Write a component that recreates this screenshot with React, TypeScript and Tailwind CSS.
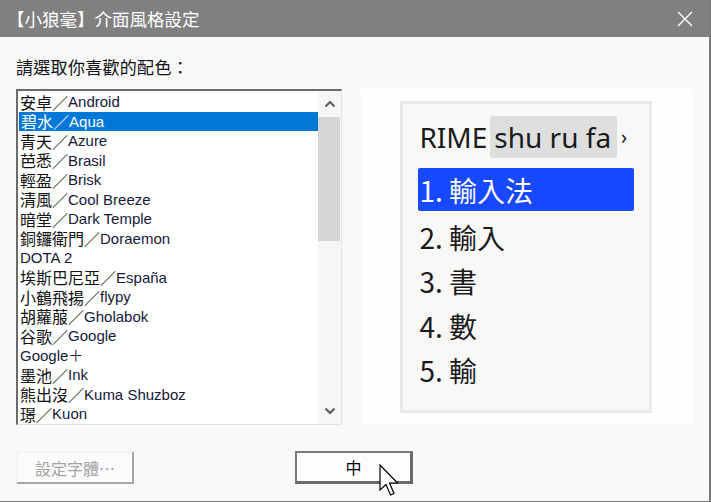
import React from 'react';

const CJK = '"Noto Sans CJK TC", "Noto Sans", sans-serif';

const schemes: { zh?: string; en: string }[] = [
  { zh: '安卓', en: 'Android' },
  { zh: '碧水', en: 'Aqua' },
  { zh: '青天', en: 'Azure' },
  { zh: '芭悉', en: 'Brasil' },
  { zh: '輕盈', en: 'Brisk' },
  { zh: '清風', en: 'Cool Breeze' },
  { zh: '暗堂', en: 'Dark Temple' },
  { zh: '銅鑼衛門', en: 'Doraemon' },
  { en: 'DOTA 2' },
  { zh: '埃斯巴尼亞', en: 'España' },
  { zh: '小鶴飛揚', en: 'flypy' },
  { zh: '胡蘿菔', en: 'Gholabok' },
  { zh: '谷歌', en: 'Google' },
  { en: 'Google＋' },
  { zh: '墨池', en: 'Ink' },
  { zh: '熊出沒', en: 'Kuma Shuzboz' },
  { zh: '璟', en: 'Kuon' },
];

const candidates = ['輸入法', '輸入', '書', '數', '輸'];

function Chevron({ down }: { down?: boolean }) {
  return (
    <svg width="12" height="8" viewBox="0 0 12 8" className={down ? 'rotate-180' : ''}>
      <path d="M1.5 6.5 L6 2 L10.5 6.5" fill="none" stroke="#606060" strokeWidth="2.2" />
    </svg>
  );
}

function SchemeList() {
  return (
    <div className="flex w-[328px] h-[336px] border-t-2 border-l-2 border-[#6b6b6b] border-r border-b border-r-[#e2e2e2] border-b-[#e2e2e2] bg-white">
      <div className="flex-1 overflow-hidden pt-[1px]">
        {schemes.map((s, i) => (
          <div
            key={s.en}
            className={`flex items-center h-[19.5px] pl-[2px] whitespace-nowrap ${
              i === 1 ? 'bg-[#0078d7] text-white ml-[1px] pl-[1px]' : 'text-[#111]'
            }`}
          >
            {s.zh && (
              <span className="text-[16px] leading-none" style={{ fontFamily: CJK }}>
                {s.zh}／
              </span>
            )}
            <span
              className={`text-[15px] leading-none ${i === 1 ? 'text-white' : 'text-[#15193a]'}`}
              style={{ fontFamily: '"Liberation Sans", "Noto Sans CJK TC", sans-serif' }}
            >
              {s.en}
            </span>
          </div>
        ))}
      </div>
      <div className="w-[23px] flex flex-col bg-[#f6f6f6]">
        <div className="h-[26px] flex items-center justify-center">
          <Chevron />
        </div>
        <div className="h-[124px] mr-[1px] bg-[#d6d6d6]" />
        <div className="flex-1" />
        <div className="h-[26px] flex items-center justify-center">
          <Chevron down />
        </div>
      </div>
    </div>
  );
}

function Preview() {
  return (
    <div className="w-[333px] h-[336px] ml-[19px] bg-[#fefefe] pt-[12px] pl-[39px]">
      <div
        className="w-[252px] h-[312px] border-[3px] border-[#e9e9e9] bg-[#f8f8f6] pt-[12px] pl-[15px] text-[28px] text-[#1a1a1a]"
        style={{ fontFamily: '"Noto Sans", "Noto Sans CJK TC", sans-serif' }}
      >
        <div className="flex items-center h-[42px] leading-none">
          <span className="pl-[1px]">RIME</span>
          <span className="ml-[3px] h-[42px] flex items-center pl-[4px] pr-[6px] bg-[#dedede] rounded-[3px]">
            shu ru fa
          </span>
          <span className="ml-[4px] text-[20px]">›</span>
        </div>
        <div className="mt-[10px] flex flex-col">
          {candidates.map((c, i) => (
            <div
              key={c}
              className={`flex items-center w-[216px] ${
                i === 0
                  ? 'h-[43px] mb-[4px] bg-[#1848ff] text-white rounded-[2px]'
                  : 'h-[44.3px]'
              }`}
              style={{ fontFamily: CJK }}
            >
              <span className="pl-[1px] leading-none">
                {i + 1}. {c}
              </span>
            </div>
          ))}
        </div>
      </div>
    </div>
  );
}

function Cursor() {
  return (
    <svg
      width="22"
      height="36"
      viewBox="0 0 22 36"
      className="absolute left-[84px] top-[13px]"
    >
      <path
        d="M1 1 L1 26 L7 20.5 L11.5 31 L15 29.5 L10.5 19 L18.5 19 Z"
        fill="#fff"
        stroke="#000"
        strokeWidth="1.2"
        strokeLinejoin="miter"
      />
    </svg>
  );
}

export default function App() {
  return (
    <div
      className="w-[711px] h-[502px] flex flex-col bg-[#f9f9f9] border-r-2 border-b border-[#7a7a7a] overflow-hidden"
      style={{ fontFamily: CJK }}
    >
      <div className="h-[37px] shrink-0 bg-[#808080] flex items-center justify-between pl-[7px] pr-[16px] text-white">
        <span className="text-[17.5px] leading-none">【小狼毫】介面風格設定</span>
        <svg width="16" height="16" viewBox="0 0 16 16">
          <path d="M1 1 L15 15 M15 1 L1 15" stroke="#fff" strokeWidth="1.4" />
        </svg>
      </div>

      <div className="flex flex-col px-[16px]">
        <div className="mt-[18px] h-[22px] flex items-center text-[17px] tracking-[0.3px] leading-none text-[#111]">
          請選取你喜歡的配色：
        </div>
        <div className="mt-[12px] flex">
          <SchemeList />
          <Preview />
        </div>

        <div className="mt-[26px] flex items-center">
          <button
            disabled
            className="w-[118px] h-[33px] border-t-2 border-l-2 border-t-[#f4f4f4] border-l-[#f4f4f4] border-r-2 border-b-2 border-r-[#a6a6a6] border-b-[#a6a6a6] bg-[#fbfbfb] text-[16px] text-[#a3a3a3] leading-none"
          >
            設定字體…
          </button>
          <div className="relative ml-[161px]">
            <button className="w-[118px] h-[33px] border-2 border-[#7a7a7a] border-r-[3px] border-b-[3px] border-r-[#6a6a6a] border-b-[#6a6a6a] bg-[#fdfdfd] text-[16px] text-black leading-none">
              中
            </button>
            <Cursor />
          </div>
        </div>
      </div>
    </div>
  );
}
